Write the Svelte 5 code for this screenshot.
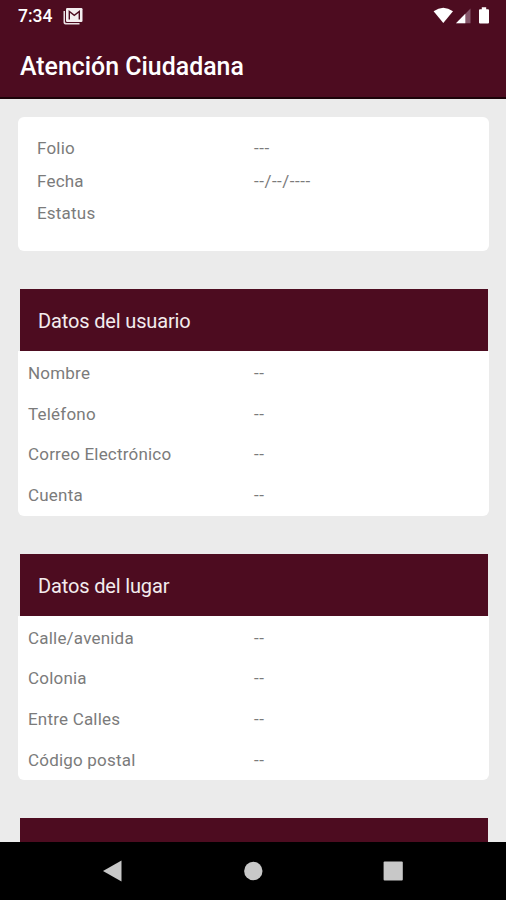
<script>
	let resumen = [
		{ label: "Folio", value: "---" },
		{ label: "Fecha", value: "--/--/----" },
		{ label: "Estatus", value: "" },
	];

	let secciones = [
		{
			title: "Datos del usuario",
			rows: ["Nombre", "Teléfono", "Correo Electrónico", "Cuenta"],
		},
		{
			title: "Datos del lugar",
			rows: ["Calle/avenida", "Colonia", "Entre Calles", "Código postal"],
		},
		{ title: "", rows: [] },
	];
</script>

<div class="screen">
	<header>
		<div class="status">
			<span class="time">7:34</span>
			<svg class="mail" width="20" height="17" viewBox="0 0 20 17">
				<path d="M.5 3v11.500q0 2 2 2h14v-1.500h-13q-1.500 0-1.500-1.500V3z" fill="#e9dfe2" />
				<rect x="3" y="0" width="16.500" height="14" rx="1.200" fill="#f4eef0" />
				<path d="M6.300 11.500V3.400l5 3.900 5-3.900v8.100" fill="none" stroke="#4d0c20" stroke-width="1.400" />
			</svg>
			<svg class="signal" width="58" height="18" viewBox="0 0 58 18">
				<path d="M.6 4.300Q10.200 -2.800 20 4.300L10.300 16z" fill="#fff" />
				<path d="M23 16.300L37.500 1.500v14.800z" fill="#85566a" />
				<path d="M23 16.300L32.300 6.800v9.500z" fill="#fff" />
				<path d="M46 3.200q0-1 1-1h1.800V.3h4.400v1.900H55q1 0 1 1v12.300q0 1-1 1h-8q-1 0-1-1z" fill="#fff" />
			</svg>
		</div>
		<h1>Atención Ciudadana</h1>
	</header>

	<main>
		<div class="card summary">
			{#each resumen as row}
				<div class="row">
					<span class="label">{row.label}</span>
					<span class="value">{row.value}</span>
				</div>
			{/each}
		</div>

		{#each secciones as seccion}
			<section>
				<h2>{seccion.title}</h2>
				<div class="card rows">
					{#each seccion.rows as label}
						<div class="row">
							<span class="label">{label}</span>
							<span class="value">--</span>
						</div>
					{/each}
				</div>
			</section>
		{/each}
	</main>

	<nav>
		<svg width="20" height="22" viewBox="0 0 20 22"><path d="M0 11L18.500 .6v20.800z" fill="#c8c8c8" /></svg>
		<svg width="20" height="20" viewBox="0 0 20 20"><circle cx="10.300" cy="10" r="9.200" fill="#c8c8c8" /></svg>
		<svg width="20" height="20" viewBox="0 0 20 20"><rect x=".6" y=".4" width="19.200" height="19.200" rx="1" fill="#c8c8c8" /></svg>
	</nav>
</div>

<style>
	:global(body) {
		margin: 0;
		overflow: hidden;
	}
	.screen {
		display: flex;
		flex-direction: column;
		width: 506px;
		height: 900px;
		background: #ebebeb;
		font-family: Roboto, "Liberation Sans", sans-serif;
	}
	header {
		flex: none;
		box-sizing: border-box;
		height: 99px;
		background: #4d0c20;
		border-bottom: 2px solid #1c0309;
		color: #fff;
	}
	.status {
		display: flex;
		align-items: center;
		height: 32px;
		padding: 0 15px 0 18px;
	}
	.time {
		font-size: 17.5px;
		font-weight: 500;
		line-height: 32px;
	}
	.mail {
		margin-left: 11px;
	}
	.signal {
		margin-left: auto;
	}
	h1 {
		margin: 0 0 0 20px;
		font-size: 24.9px;
		font-weight: 500;
		line-height: 69px;
	}
	main {
		flex: 1;
		min-height: 0;
		overflow: hidden;
		padding: 18px 17px 0 18px;
	}
	.card {
		box-sizing: border-box;
		background: #fff;
		border-radius: 6px;
	}
	.summary {
		height: 134px;
		padding: 15px 19px 0;
	}
	section {
		margin-top: 38px;
	}
	h2 {
		height: 62px;
		margin: 0 1px 0 2px;
		padding-left: 18px;
		background: #4d0c20;
		color: #f3ecee;
		font-size: 20px;
		font-weight: 400;
		letter-spacing: -0.15px;
		line-height: 64px;
	}
	.rows {
		padding: 1.5px 0 0 10px;
		border-radius: 0 0 6px 6px;
	}
	.row {
		display: grid;
		grid-template-columns: 226px 1fr;
		align-items: center;
		height: 40.8px;
		color: #7b7b7b;
		font-size: 17px;
		letter-spacing: 0.2px;
	}
	.value {
		letter-spacing: 0.5px;
	}
	.summary .row {
		grid-template-columns: 217px 1fr;
		height: 32.5px;
	}
	nav {
		flex: none;
		display: flex;
		justify-content: space-between;
		align-items: center;
		box-sizing: border-box;
		height: 58px;
		padding: 0 103px;
		background: #000;
	}
</style>
